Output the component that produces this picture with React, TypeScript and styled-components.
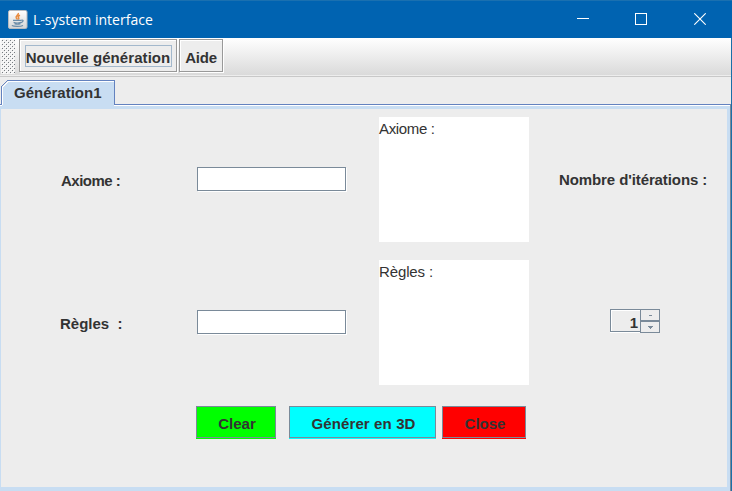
import React from "react";
import styled, { createGlobalStyle } from "styled-components";

const GlobalStyle = createGlobalStyle`
  * { box-sizing: border-box; }
  body { margin: 0; overflow: hidden; }
  button, input { font: inherit; color: inherit; margin: 0; padding: 0; border-radius: 0; }
`;

const Window = styled.div`
  width: 732px;
  height: 491px;
  display: flex;
  flex-direction: column;
  background: #ededed;
  color: #333;
  font: bold 15px/18px "Liberation Sans", Arial, sans-serif;
  white-space: nowrap;
`;

const TitleBar = styled.header`
  height: 38px;
  flex: none;
  display: flex;
  align-items: center;
  padding: 0 2px 0 8px;
  background: #0063b1;
  border-top: 1px solid #1a70b0;
  color: #fff;
  svg { display: block; }
`;

const Title = styled.h1`
  flex: 1;
  margin: 0 0 0 5px;
  font: 400 14px/20px "Open Sans", "Noto Sans", sans-serif;
  letter-spacing: 0.03px;
`;

const WindowButton = styled.button<{ $width?: number }>`
  width: ${(p) => p.$width ?? 58}px;
  height: 36px;
  display: flex;
  align-items: center;
  justify-content: center;
  align-self: flex-start;
  border: 0;
  background: none;
`;

const Body = styled.div`
  flex: 1;
  min-height: 0;
  display: flex;
  flex-direction: column;
  border-right: 1px solid #1a6fa8;
`;

const Toolbar = styled.div`
  height: 39px;
  flex: none;
  display: flex;
  padding: 1px 0 0 1px;
  background: linear-gradient(#fff, #dadada 37px, #ededed 37px, #ededed 38px, #c8c8c8 38px);
`;

const GripTexture = styled.svg`
  display: block;
  flex: none;
  margin-right: 4px;
`;

const ToolButton = styled.button<{ $width: number; $spacing?: number }>`
  width: ${(p) => p.$width}px;
  height: 33px;
  display: flex;
  align-items: center;
  justify-content: center;
  margin-right: 2px;
  border: 1px solid #999;
  background: #ededed;
  box-shadow: inset 1px 1px #fff, 1px 1px #fff;
  letter-spacing: ${(p) => p.$spacing ?? 0}px;
  padding-top: 5px;
`;

const FocusRing = styled.span`
  width: 147px;
  height: 22px;
  margin-top: -5px;
  padding-top: 3px;
  border: 1px solid #a3b8cc;
`;

const TabStrip = styled.div`
  height: 27px;
  flex: none;
  padding: 3px 0 0 1px;
`;

const Tab = styled.div`
  position: relative;
  width: 114px;
  height: 25px;
  padding: 4px 0 0 13px;

  svg { position: absolute; left: 0; top: 0; }
  span { position: relative; }
`;

const Panel = styled.main`
  flex: 1;
  min-height: 0;
  border-top: 1px solid #6382bf;
  border-right: 1px solid #7a8a99;
`;

const PanelHighlight = styled.div`
  height: 100%;
  border-top: 1px solid #fff;
`;

const PanelFrame = styled.div`
  height: 100%;
  border: solid #c8ddf2;
  border-width: 3px 3px 4px 1px;
  padding-top: 8px;
`;

const FormGrid = styled.div`
  display: grid;
  grid-template-columns: 196px 182px 150px 1fr;
  grid-template-rows: 125px 125px;
  row-gap: 18px;
`;

const Cell = styled.div<{ $left?: number; $top?: number; $bottom?: number }>`
  display: flex;
  align-items: center;
  padding: ${(p) => p.$top ?? 0}px 0 ${(p) => p.$bottom ?? 0}px ${(p) => p.$left ?? 0}px;
`;

const Caption = styled.label<{ $spacing?: number }>`
  white-space: pre;
  letter-spacing: ${(p) => p.$spacing ?? 0}px;
`;

const TextField = styled.input`
  width: 149px;
  height: 24px;
  border: 1px solid #7a8a99;
  background: #fff;
  box-shadow: 1px 1px #fff;
  outline: none;
`;

const TextArea = styled.div<{ $spacing: number }>`
  background: #fff;
  font-weight: 400;
  line-height: 17px;
  padding-top: 3px;
  letter-spacing: ${(p) => p.$spacing}px;
`;

const Spinner = styled.div`
  display: flex;
  width: 50px;
  height: 24px;
`;

const SpinnerValue = styled.div`
  width: 30px;
  height: 23px;
  border: 1px solid #7a8a99;
  border-right: 0;
  box-shadow: inset 1px 1px #fff, 0 1px #fff;
  text-align: right;
  padding: 4px 2px 0 0;
`;

const SpinnerButtons = styled.div`
  width: 20px;
  display: flex;
  flex-direction: column;
`;

const SpinnerButton = styled.button`
  height: 12px;
  border: 1px solid #7a8a99;
  background: #ededed;
  display: flex;
  align-items: center;
  justify-content: center;
`;

const Actions = styled.div`
  display: flex;
  margin: 21px 0 0 195px;
`;

const ActionButton = styled.button<{ $color: string; $width: number; $gap?: number; $spacing?: number }>`
  width: ${(p) => p.$width}px;
  height: 32px;
  margin-right: ${(p) => p.$gap ?? 0}px;
  padding: 3px 0 0 2px;
  border: 1px solid #7a8a99;
  background: ${(p) => p.$color};
  box-shadow: 0 1px ${(p) => p.$color};
  letter-spacing: ${(p) => p.$spacing ?? 0}px;
`;

const JavaIcon = () => (
  <svg width="20" height="20" viewBox="0 0 20 20" fill="none">
    <defs>
      <linearGradient id="tile" x1="0" y1="0" x2="0" y2="1">
        <stop stopColor="#fff" />
        <stop offset="1" stopColor="#d4d5d6" />
      </linearGradient>
    </defs>
    <rect x=".5" y=".5" width="18.5" height="18" rx="1.5" fill="url(#tile)" stroke="#b7bbc0" />
    <path d="M10.3 3c1 2-3.5 3-2 5l1.3 1.5M12 5.3c-2.2 1-2.2 1.7-1.4 2.4.6.7 0 1.4-.5 1.7" stroke="#e98b3e" strokeWidth="1.5" />
    <path d="M5 10.4h8.5M5.6 12.4c1.8.7 5 .7 7.4 0M6.5 13.8c1.8.6 4 .6 6 0M13.6 10.2c2.2-.6 2 1.8-.6 2.4M3.8 15.5c2.2 1.2 8.7 1.2 11.2 0" stroke="#6b8ca8" strokeWidth="1.2" />
  </svg>
);

const Grip = () => (
  <GripTexture width="14" height="36" shapeRendering="crispEdges">
    <defs>
      <pattern id="bumps" width="4" height="4" patternUnits="userSpaceOnUse">
        <path d="M1 1h1v1H1zM3 3h1v1H3z" fill="#777c81" />
        <path d="M2 2h1v1H2zM0 0h1v1H0z" fill="#fff" />
      </pattern>
    </defs>
    <rect width="14" height="35" fill="#f2f2f2" />
    <rect width="14" height="35" fill="url(#bumps)" />
  </GripTexture>
);

export default function App() {
  return (
    <>
      <GlobalStyle />
      <Window>
        <TitleBar>
          <JavaIcon />
          <Title>L-system interface</Title>
          <WindowButton aria-label="Minimize">
            <svg width="12" height="12" shapeRendering="crispEdges"><path d="M0 5.5h12" stroke="#fff" /></svg>
          </WindowButton>
          <WindowButton aria-label="Maximize">
            <svg width="12" height="12" fill="none" shapeRendering="crispEdges"><path d="M.5.5h11v11H.5z" stroke="#fff" /></svg>
          </WindowButton>
          <WindowButton $width={60} aria-label="Close window">
            <svg width="12" height="12"><path d="M.3.3l11.4 11.4M11.7.3.3 11.7" stroke="#fff" strokeWidth="1.1" /></svg>
          </WindowButton>
        </TitleBar>
        <Body>
          <Toolbar>
            <Grip />
            <ToolButton $width={158} $spacing={0.07}><FocusRing>Nouvelle génération</FocusRing></ToolButton>
            <ToolButton $width={44} $spacing={-0.2}>Aide</ToolButton>
          </Toolbar>
          <TabStrip>
            <Tab>
              <svg width="114" height="28" fill="none" shapeRendering="crispEdges">
                <path d="M1 28V7l6-6h106v27z" fill="#c8ddf2" />
                <path d="M1.5 25V7.5l6-6H113" stroke="#fff" />
                <path d="M.5 25V6.5l6-6h107V25" stroke="#6382bf" />
              </svg>
              <span>Génération1</span>
            </Tab>
          </TabStrip>
          <Panel>
            <PanelHighlight>
              <PanelFrame>
                <FormGrid>
                  <Cell $left={60} $top={3}><Caption $spacing={-0.5}>Axiome :</Caption></Cell>
                  <Cell $bottom={2}><TextField aria-label="Axiome" /></Cell>
                  <TextArea $spacing={-0.35}>Axiome :</TextArea>
                  <Cell $left={30} $top={1}><Caption $spacing={-0.1}>Nombre d'itérations :</Caption></Cell>
                  <Cell $left={59} $top={3}><Caption>{"Règles  :"}</Caption></Cell>
                  <Cell $bottom={2}><TextField aria-label="Règles" /></Cell>
                  <TextArea $spacing={-0.12}>Règles :</TextArea>
                  <Cell $left={81} $bottom={3}>
                    <Spinner>
                      <SpinnerValue>1</SpinnerValue>
                      <SpinnerButtons>
                        <SpinnerButton aria-label="Increase">
                          <svg width="5" height="3" shapeRendering="crispEdges"><path d="M1 1h3v1H1z" fill="#7a8a99" /></svg>
                        </SpinnerButton>
                        <SpinnerButton aria-label="Decrease">
                          <svg width="5" height="3" shapeRendering="crispEdges"><path d="M0 0h5v1H4v1H3v1H2V2H1V1H0z" fill="#7a8a99" /></svg>
                        </SpinnerButton>
                      </SpinnerButtons>
                    </Spinner>
                  </Cell>
                </FormGrid>
                <Actions>
                  <ActionButton $color="#00ff00" $width={80} $gap={13}>Clear</ActionButton>
                  <ActionButton $color="#00ffff" $width={147} $gap={6} $spacing={0.12}>Générer en 3D</ActionButton>
                  <ActionButton $color="#ff0000" $width={84}>Close</ActionButton>
                </Actions>
              </PanelFrame>
            </PanelHighlight>
          </Panel>
        </Body>
      </Window>
    </>
  );
}
